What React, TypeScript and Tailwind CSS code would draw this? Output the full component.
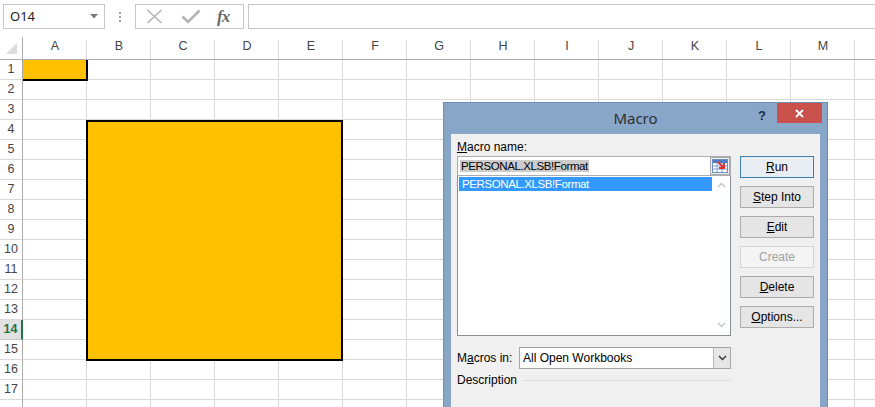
import React from 'react';

const COLS = ['A', 'B', 'C', 'D', 'E', 'F', 'G', 'H', 'I', 'J', 'K', 'L', 'M', 'N'];
const ROWS = Array.from({ length: 18 }, (_, i) => i + 1);
const ACTIVE_ROW = 14;
// labels past the window edge are not drawn
const LAST_LABEL_COL = 'M';
const LAST_LABEL_ROW = 17;

const Chevron = ({ up, color }: { up?: boolean; color: string }) => (
  <svg width="9" height="6" viewBox="0 0 9 6">
    <path d={up ? 'M1 5 L4.5 1.5 L8 5' : 'M1 1 L4.5 4.5 L8 1'} fill="none" stroke={color} strokeWidth="1.4" />
  </svg>
);

const RefEditIcon = () => (
  <svg width="16" height="14" viewBox="0 0 16 14">
    <rect x="0.5" y="0.5" width="15" height="13" fill="#fff" stroke="#6d8fc0" />
    <rect x="1" y="1" width="14" height="3" fill="#4f7cc4" />
    <path d="M1 7 H15 M1 10 H15 M5 4 V13 M10 4 V13" stroke="#7fa0d0" strokeWidth="1" />
    <path d="M6 3 L12 9 M12 4 V9 H7" fill="none" stroke="#e03030" strokeWidth="2" />
  </svg>
);

const Btn = ({ children, primary, disabled }: { children: React.ReactNode; primary?: boolean; disabled?: boolean }) => (
  <div
    className={
      primary
        ? 'h-[22px] flex items-center justify-center border border-[#3c7fb1] bg-[#e9eef4] text-[12px] text-black'
        : disabled
        ? 'h-[22px] flex items-center justify-center border border-[#d5d5d5] bg-[#f4f4f4] text-[12px] text-[#a0a0a0]'
        : 'h-[22px] flex items-center justify-center border border-[#acacac] bg-[#e5e5e5] text-[12px] text-black'
    }
  >
    {children}
  </div>
);

const MacroDialog = () => (
  <div className="absolute left-[443px] top-[102px] w-[385px] h-[330px] bg-[#87a6c8] border border-[#6f8db2] flex flex-col font-['Liberation_Sans',Arial,sans-serif]">
    {/* title bar */}
    <div className="relative h-[31px] flex items-center justify-center">
      <span className="text-[15px] text-[#2e2e2e] font-['Noto_Sans','Liberation_Sans',sans-serif]">Macro</span>
      <span className="absolute right-[61px] top-[3px] text-[13px] font-bold text-[#1f2d40]">?</span>
      <div className="absolute right-[5px] top-0 w-[45px] h-[20px] bg-[#c9504b] flex items-center justify-center">
        <svg width="9" height="9" viewBox="0 0 9 9">
          <path d="M1 1 L8 8 M8 1 L1 8" stroke="#fff" strokeWidth="1.8" />
        </svg>
      </div>
    </div>

    {/* body */}
    <div className="mx-[7px] flex-1 bg-[#f0f0f0] pl-[6px] text-[12px] text-black">
      <div className="h-[22px] pt-[5px] leading-[16px]">
        <span className="underline">M</span>acro name:
      </div>
      <div className="flex">
        <div className="w-[274px] flex flex-col">
          <div className="h-[20px] flex items-center border border-[#abadb3] bg-white">
            <span className="ml-[2px] flex-1">
              <span className="bg-[#cccccc] text-[11.5px] tracking-[-0.4px] px-[1px]">PERSONAL.XLSB!Format</span>
            </span>
            <div className="w-[20px] h-[18px] border border-[#a8a8a8] bg-[#eef2f7] flex items-center justify-center">
              <RefEditIcon />
            </div>
          </div>
          <div className="h-[160px] border border-[#8a8f96] border-t-0 bg-white flex">
            <div className="flex-1 pt-[1px] pl-[1px]">
              <div className="h-[14px] bg-[#3399ff] text-white text-[11.5px] tracking-[-0.4px] leading-[14px] pl-[3px]">
                PERSONAL.XLSB!Format
              </div>
            </div>
            <div className="w-[18px] flex flex-col items-center justify-between pt-[6px] pb-[7px]">
              <Chevron up color="#c4c4c4" />
              <Chevron color="#c4c4c4" />
            </div>
          </div>
          <div className="mt-[11px] h-[22px] flex items-center">
            <span className="w-[62px]">
              M<span className="underline">a</span>cros in:
            </span>
            <div className="flex-1 h-[22px] flex items-center border border-[#a5a5a5] bg-white">
              <span className="flex-1 pl-[3px]">All Open Workbooks</span>
              <div className="w-[17px] h-full bg-[#e6e6e6] border-l border-[#b9b9b9] flex items-center justify-center">
                <Chevron color="#333" />
              </div>
            </div>
          </div>
          <div className="mt-[3px] flex items-center h-[16px]">
            <span>Description</span>
            <div className="flex-1 ml-[6px] border-t border-[#dcdcdc]" />
          </div>
        </div>

        <div className="ml-[9px] w-[74px] flex flex-col gap-[8px]">
          <Btn primary>
            <span className="underline">R</span>un
          </Btn>
          <Btn>
            <span className="underline">S</span>tep Into
          </Btn>
          <Btn>
            <span className="underline">E</span>dit
          </Btn>
          <Btn disabled>Create</Btn>
          <Btn>
            <span className="underline">D</span>elete
          </Btn>
          <Btn>
            <span className="underline">O</span>ptions...
          </Btn>
        </div>
      </div>
    </div>
  </div>
);

const FormulaBar = () => (
  <div className="h-[37px] pt-[4px] pl-[3px] flex items-start bg-white">
    <div className="w-[102px] h-[25px] border border-[#c6c6c6] flex items-center pl-[6px] pr-[6px]">
      <span className="flex-1 text-[13px] text-[#222]">O14</span>
      <svg width="8" height="5" viewBox="0 0 8 5">
        <path d="M0 0 H8 L4 4.5 Z" fill="#7a7a7a" />
      </svg>
    </div>
    <div className="w-[30px] h-[25px] flex flex-col items-center justify-center gap-[2px]">
      <div className="w-[2px] h-[2px] bg-[#a0a0a0]" />
      <div className="w-[2px] h-[2px] bg-[#a0a0a0]" />
      <div className="w-[2px] h-[2px] bg-[#a0a0a0]" />
    </div>
    <div className="w-[109px] h-[25px] border border-[#c6c6c6] flex items-center">
      <svg className="ml-[10px]" width="17" height="15" viewBox="0 0 17 15">
        <path d="M1.5 1 L15.5 14 M15.5 1 L1.5 14" stroke="#b4b4b4" strokeWidth="1.6" />
      </svg>
      <svg className="ml-[18px]" width="20" height="15" viewBox="0 0 20 15">
        <path d="M1.5 7.5 L7 13 L18.5 1.5" fill="none" stroke="#b4b4b4" strokeWidth="2.6" />
      </svg>
      <span className="ml-[16px] text-[17px] italic font-bold text-[#6a6a6a] font-['Liberation_Serif',serif] tracking-[-1px]">
        fx
      </span>
    </div>
    <div className="ml-[4px] flex-1 -mr-[4px] h-[25px] border border-[#c6c6c6]" />
  </div>
);

const Sheet = () => (
  <div className="grid grid-cols-[23px_repeat(14,64px)] grid-rows-[23px_repeat(18,20px)] text-[#444] text-[12.5px] font-['Liberation_Sans',Arial,sans-serif]">
    <div className="border-r border-b border-[#ababab] flex items-end justify-end pr-[5px] pb-[5px]" style={{ gridColumn: 1, gridRow: 1 }}>
      <svg width="11" height="11" viewBox="0 0 11 11">
        <path d="M11 0 V11 H0 Z" fill="#dcdcdc" />
      </svg>
    </div>
    {COLS.map((c, i) => (
      <div
        key={c}
        className="border-b border-[#ababab] flex items-end justify-center pb-[3px] relative"
        style={{ gridColumn: i + 2, gridRow: 1 }}
      >
        <div className="absolute right-0 top-[3px] bottom-0 w-px bg-[#d9d9d9]" />
        {c <= LAST_LABEL_COL ? c : null}
      </div>
    ))}
    {ROWS.map((r) => (
      <React.Fragment key={r}>
        <div
          className={
            r === ACTIVE_ROW
              ? 'bg-[#e1e1e1] border-r-2 border-b border-r-[#217346] border-b-[#c6c6c6] flex items-center justify-center font-bold text-[#217346]'
              : 'border-r border-b border-r-[#ababab] border-b-[#d9d9d9] flex items-center justify-center'
          }
          style={{ gridColumn: 1, gridRow: r + 1 }}
        >
          {r <= LAST_LABEL_ROW ? r : null}
        </div>
        {COLS.map((c, i) => (
          <div key={c} className="border-r border-b border-[#dadada]" style={{ gridColumn: i + 2, gridRow: r + 1 }} />
        ))}
      </React.Fragment>
    ))}
    {/* filled cells */}
    <div className="col-start-2 row-start-2 -mr-px -mb-px bg-[#ffc000] border-r-2 border-b-2 border-black" />
    <div className="col-start-3 col-end-7 row-start-5 row-end-17 -ml-px -mb-px bg-[#ffc000] border-2 border-black" />
  </div>
);

export default function App() {
  return (
    <div className="relative w-[875px] h-[407px] overflow-hidden bg-white">
      <FormulaBar />
      <Sheet />
      <MacroDialog />
    </div>
  );
}
